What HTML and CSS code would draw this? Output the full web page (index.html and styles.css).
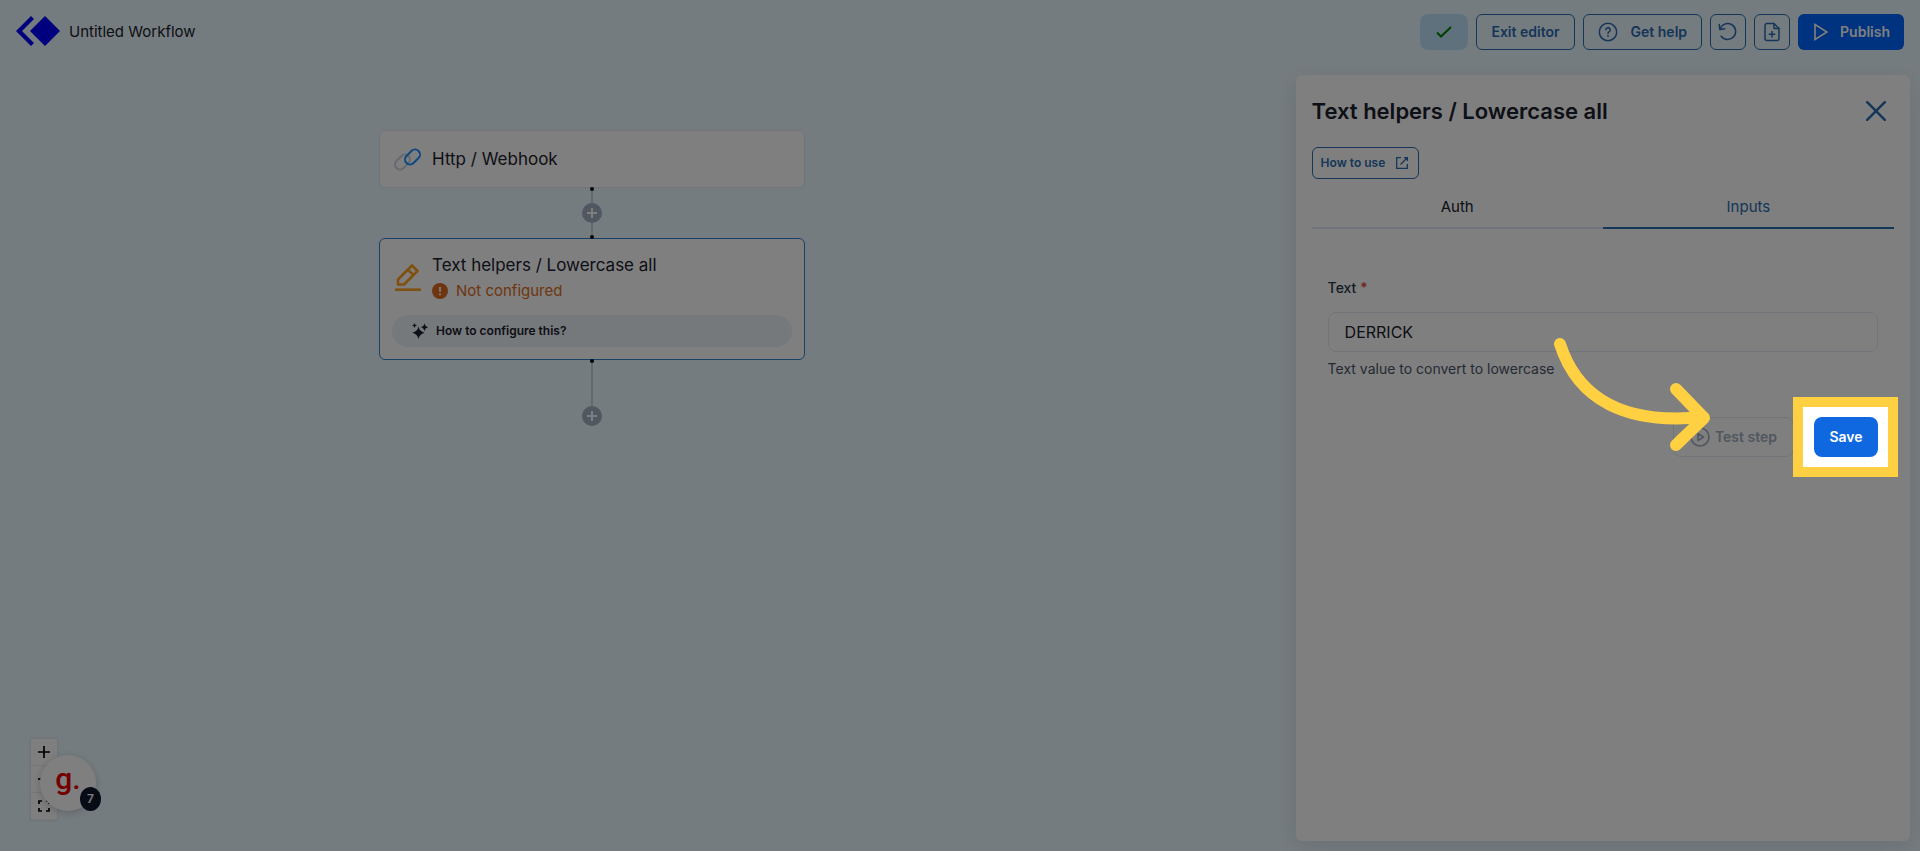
FILE: index.html
```html
<!DOCTYPE html>
<html lang="en">
<head>
    <meta charset="UTF-8">
    <meta name="viewport" content="width=device-width, initial-scale=1.0">
    <title>Untitled Workflow</title>
    <link rel="stylesheet" href="styles.css">
</head>
<body>
    <header class="topbar">
        <a class="brand" href="#" aria-label="Home">
            <svg width="44" height="30" viewBox="0 0 44 30" fill="#0000ff">
                <path d="M29 0 L44 15 L29 30 L14 15 Z"/>
                <path d="M15 0 L18 3 L6 15 L18 27 L15 30 L0 15 Z"/>
            </svg>
        </a>
        <span class="workflow-name">Untitled Workflow</span>
        <div class="actions">
            <button class="btn btn-saved" aria-label="Saved">
                <svg width="16" height="12" viewBox="0 0 16 12" fill="none" stroke="#008000" stroke-width="2"><path d="M1 6.5 L5 10.5 L15 1"/></svg>
            </button>
            <button class="btn btn-outline">Exit editor</button>
            <button class="btn btn-outline btn-help">
                <svg width="20" height="20" viewBox="0 0 20 20" fill="none" stroke="currentColor" stroke-width="1.5" stroke-linecap="round">
                    <circle cx="10" cy="10" r="8.7"/>
                    <path d="M7.8 7.8 a2.2 2.2 0 1 1 3.2 2 q-1 .6 -1 1.6"/>
                    <path d="M10 13.9 v.1" stroke-width="1.8"/>
                </svg>
                Get help
            </button>
            <button class="btn btn-outline btn-icon" aria-label="Undo">
                <svg width="20" height="20" viewBox="0 0 20 20" fill="none" stroke="currentColor" stroke-width="1.5" stroke-linecap="round" stroke-linejoin="round">
                    <path d="M1.2 2.5 L1.8 7.5 L6.8 6.8"/>
                    <path d="M2 7.2 A8 8 0 1 1 3.2 14.2"/>
                </svg>
            </button>
            <button class="btn btn-outline btn-icon" aria-label="New file">
                <svg width="20" height="20" viewBox="0 0 20 20" fill="none" stroke="currentColor" stroke-width="1.5" stroke-linecap="round" stroke-linejoin="round">
                    <path d="M12 1.5 H5 A2 2 0 0 0 3 3.5 V16.5 A2 2 0 0 0 5 18.5 H15 A2 2 0 0 0 17 16.5 V6.5 Z"/>
                    <path d="M12 1.5 V6.5 H17"/>
                    <path d="M10 9.5 V15 M7.2 12.2 H12.8"/>
                </svg>
            </button>
            <button class="btn btn-publish">
                <svg width="16" height="18" viewBox="0 0 16 18" fill="none" stroke="currentColor" stroke-width="1.6"><path d="M3 1.5 V16.5 L15 9 Z"/></svg>
                Publish
            </button>
        </div>
    </header>

    <main class="editor">
        <section class="canvas">
            <div class="flow">
                <div class="node">
                    <svg class="node-icon" width="28" height="28" viewBox="0 0 28 28" fill="none" stroke-width="2">
                        <rect x="0" y="12" width="17" height="10" rx="5" stroke="#cbd5e0" transform="rotate(-45 8.5 17)"/>
                        <rect x="10" y="7" width="17" height="10" rx="5" stroke="#1890ff" transform="rotate(-45 18.5 12)"/>
                    </svg>
                    <span class="node-title">Http / Webhook</span>
                </div>
                <div class="connector">
                    <i class="dot"></i>
                    <i class="line"></i>
                    <button class="add-step" aria-label="Add step"><svg width="10" height="10" viewBox="0 0 10 10" stroke="#fff" stroke-width="2"><path d="M5 0 V10 M0 5 H10"/></svg></button>
                    <i class="line"></i>
                    <i class="dot"></i>
                </div>
                <div class="node node-selected">
                    <div class="node-head">
                        <svg class="node-icon" width="28" height="28" viewBox="0 0 28 28" fill="none" stroke="#ffa01c" stroke-width="2.6" stroke-linejoin="round">
                            <path d="M1 26.7 H27"/>
                            <path d="M4 21.5 V16.5 L18 2.5 L23.5 8 L10 21.5 Z"/>
                            <path d="M13.5 6.5 L19.5 12"/>
                        </svg>
                        <div>
                            <div class="node-title">Text helpers / Lowercase all</div>
                            <div class="node-status">
                                <svg width="16" height="16" viewBox="0 0 16 16"><circle cx="8" cy="8" r="8" fill="#dd6b20"/><path d="M8 4 V8.8 M8 10.5 V12.2" stroke="#fff" stroke-width="1.8"/></svg>
                                Not configured
                            </div>
                        </div>
                    </div>
                    <button class="configure">
                        <svg width="16" height="16" viewBox="0 0 16 16" fill="#1a202c">
                            <path d="M6.5 3.5 Q7.5 8.5 12.5 9.7 Q7.5 11 6.5 16 Q5.5 11 .5 9.7 Q5.5 8.5 6.5 3.5 Z"/>
                            <path d="M12.5 .5 Q13 3.5 16 4.2 Q13 5 12.5 8 Q12 5 9 4.2 Q12 3.5 12.5 .5 Z"/>
                            <path d="M2.5 0 Q2.9 2.1 5 2.5 Q2.9 2.9 2.5 5 Q2.1 2.9 0 2.5 Q2.1 2.1 2.5 0 Z"/>
                        </svg>
                        How to configure this?
                    </button>
                </div>
                <div class="connector connector-end">
                    <i class="dot"></i>
                    <i class="line"></i>
                    <button class="add-step" aria-label="Add step"><svg width="10" height="10" viewBox="0 0 10 10" stroke="#fff" stroke-width="2"><path d="M5 0 V10 M0 5 H10"/></svg></button>
                </div>
            </div>

            <div class="zoom-controls">
                <button aria-label="Zoom in"><svg width="12" height="12" viewBox="0 0 12 12" stroke="#000" stroke-width="1.7"><path d="M6 0 V12 M0 6 H12"/></svg></button>
                <button aria-label="Zoom out"><svg width="12" height="12" viewBox="0 0 12 12" stroke="#000" stroke-width="1.7"><path d="M0 6 H12"/></svg></button>
                <button aria-label="Fit view"><svg width="12" height="12" viewBox="0 0 12 12" fill="none" stroke="#000" stroke-width="1.7"><path d="M1 4 V1 H4 M8 1 H11 V4 M11 8 V11 H8 M4 11 H1 V8"/></svg></button>
            </div>
            <button class="guide" aria-label="Guides">
                <span class="guide-logo">g.</span>
                <span class="guide-count">7</span>
            </button>
        </section>

        <aside class="panel">
            <div class="panel-head">
                <h1>Text helpers / Lowercase all</h1>
                <button class="close" aria-label="Close">
                    <svg width="20" height="20" viewBox="0 0 20 20" stroke="currentColor" stroke-width="2.5" stroke-linecap="round"><path d="M1.2 1.2 L18.8 18.8 M18.8 1.2 L1.2 18.8"/></svg>
                </button>
            </div>
            <a class="how-to" href="#">
                How to use
                <svg width="12" height="12" viewBox="0 0 12 12" fill="none" stroke="currentColor" stroke-width="1.3"><path d="M5 .7 H.7 V11.3 H11.3 V7 M4.5 7.5 L10.5 1.5"/><path d="M7.5 0 H12 V4.5 Z" fill="currentColor" stroke="none"/></svg>
            </a>
            <div class="tabs" role="tablist">
                <button class="tab" role="tab">Auth</button>
                <button class="tab tab-active" role="tab" aria-selected="true">Inputs</button>
            </div>
            <form class="step-form">
                <label for="text">Text <span class="required">*</span></label>
                <input type="text" id="text" value="DERRICK">
                <p class="help">Text value to convert to lowercase</p>
                <div class="form-actions">
                    <button type="button" class="test" disabled>
                        <svg width="20" height="20" viewBox="0 0 20 20" fill="none" stroke="currentColor" stroke-width="1.6" stroke-linejoin="round"><circle cx="10" cy="10" r="9"/><path d="M8 6.5 V13.5 L13.5 10 Z"/></svg>
                        Test step
                    </button>
                    <div class="spotlight">
                        <button type="button" class="save">Save</button>
                        <svg class="arrow" width="160" height="122" viewBox="0 0 160 122" fill="none" stroke="#ffd142" stroke-width="12" stroke-linecap="round" stroke-linejoin="round">
                            <path d="M10 14 C28 70 76 95 153 87"/>
                            <path d="M126 59 L154 88 L126 115"/>
                        </svg>
                    </div>
                </div>
            </form>
        </aside>
    </main>
</body>
</html>
```

FILE: styles.css
```css
* { box-sizing: border-box; }
body { margin: 0; min-height: 100vh; display: flex; flex-direction: column; overflow: hidden; background: #ebf8ff; color: #1a202c; font-family: Inter, "Liberation Sans", sans-serif; font-size: 15px; line-height: 24px; }
button, input { font: inherit; color: inherit; }
button { cursor: pointer; padding: 0; border: none; background: none; }
svg { display: block; flex: none; }

/* top bar */
.topbar { display: flex; align-items: center; padding: 14px 16px; }
.brand { margin-bottom: 2px; }
.workflow-name { margin-left: 9px; }
.actions { display: flex; gap: 8px; margin-left: auto; }
.btn { display: flex; align-items: center; justify-content: center; height: 36px; padding: 0 14px; border-radius: 6px; font-size: 14px; font-weight: 600; }
.btn-outline { border: 1px solid #2b6cb0; color: #2b6cb0; }
.btn-help { gap: 13px; }
.btn-icon { width: 36px; padding: 0; }
.btn-saved { width: 48px; border-radius: 8px; background: #bee3f8; }
.btn-publish { gap: 12px; background: #0066ff; color: #fff; }

/* canvas */
.editor { flex: 1; display: flex; }
.canvas { flex: 1; position: relative; }
.flow { position: absolute; left: 379px; top: 66px; width: 426px; }
.node { display: flex; align-items: center; gap: 10px; min-height: 58px; padding: 0 14px; border: 1px solid #e2e8f0; border-radius: 6px; background: #fff; }
.node-title { font-size: 17px; line-height: 28px; }
.node-selected { display: block; padding: 12px; border-color: #3182ce; }
.node-head { display: flex; align-items: center; gap: 10px; padding: 0 2px; }
.node-status { display: flex; align-items: center; gap: 8px; color: #dd6b20; }
.configure { display: flex; align-items: center; gap: 8px; width: 100%; height: 32px; margin-top: 12px; padding: 0 20px; border-radius: 16px; background: #edf2f7; font-size: 12px; font-weight: 600; }
.connector { display: flex; flex-direction: column; align-items: center; height: 52px; margin: -1px 0; }
.connector-end { height: 67px; }
.dot { width: 4px; height: 4px; border-radius: 50%; background: #000; }
.line { flex: 1; width: 2px; background: #cbd0d8; }
.add-step { display: flex; align-items: center; justify-content: center; width: 20px; height: 20px; border-radius: 50%; background: #a0aec0; }

.zoom-controls { position: absolute; left: 31px; bottom: 31px; box-shadow: 0 0 2px 1px rgba(0, 0, 0, 0.08); }
.zoom-controls button { display: flex; align-items: center; justify-content: center; width: 26px; height: 27px; border-bottom: 1px solid #eee; background: #fefefe; }
.guide { position: absolute; left: 40px; bottom: 40px; width: 56px; height: 56px; border-radius: 50%; background: #fff; box-shadow: 0 2px 8px rgba(0, 0, 0, 0.2); }
.guide-logo { display: block; height: 56px; color: #e60000; font-family: Roboto, sans-serif; font-size: 30px; font-weight: 500; line-height: 48px; }
.guide-count { position: absolute; right: -5px; bottom: 0; width: 21px; height: 24px; border-radius: 50%; background: #0f172a; color: #fff; font-size: 12px; font-weight: 600; }

/* side panel */
.panel { width: 32%; margin: 11px 10px 10px 0; padding: 16px; border-radius: 6px; background: #fff; box-shadow: 0 6px 24px rgba(0, 0, 0, 0.1); }
.panel-head { display: flex; align-items: center; justify-content: space-between; height: 40px; }
h1 { margin: 0; font-size: 22px; font-weight: 600; line-height: 32px; }
.close { padding: 8px; color: #2b6cb0; }
.how-to { display: inline-flex; align-items: center; gap: 11px; height: 32px; margin-top: 16px; padding: 0 10px 0 8px; border: 1px solid #2b6cb0; border-radius: 6px; color: #2b6cb0; font-size: 12px; font-weight: 600; text-decoration: none; vertical-align: top; }
.tabs { display: flex; margin-top: 8px; }
.tab { flex: 1; padding: 8px 16px; border-bottom: 2px solid #e2e8f0; }
.tab-active { border-color: #2b6cb0; color: #2b6cb0; }
.step-form { padding: 49px 16px 16px; }
.step-form label { display: block; margin-bottom: 14px; color: #2d3748; font-size: 14px; font-weight: 500; line-height: 20px; }
.required { color: #e53e3e; }
.step-form input { display: block; width: 100%; height: 40px; padding: 0 16px; border: 1px solid #e2e8f0; border-radius: 8px; background: #fff; font-size: 16px; }
.help { margin: 7px 0 38px; color: #4a5568; font-size: 14px; line-height: 20px; }
.form-actions { display: flex; justify-content: flex-end; gap: 20px; }
.test, .save { height: 40px; padding: 0 15px; border-radius: 8px; font-size: 14px; font-weight: 600; }
.test { display: flex; align-items: center; gap: 5px; padding: 0 16px; border: 1px solid #e2e8f0; color: #a0aec0; cursor: default; }
.save { min-width: 64px; background: #1068e0; color: #fff; }

/* walkthrough: dims everything around the save button */
.spotlight { position: relative; }
.spotlight::after { content: ""; position: absolute; inset: -20px -20px -20px -21px; border: 10px solid #ffd142; box-shadow: 0 0 0 3000px rgba(0, 0, 0, 0.5); pointer-events: none; }
.arrow { position: absolute; z-index: 1; right: 168px; top: -87px; pointer-events: none; }
```
